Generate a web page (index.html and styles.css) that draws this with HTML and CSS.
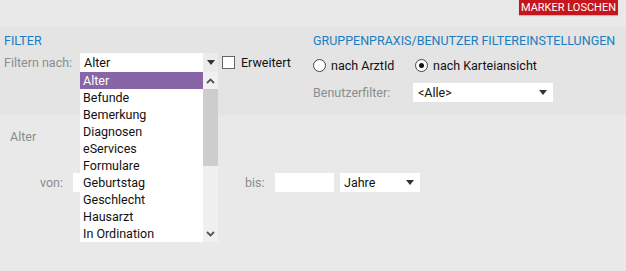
FILE: index.html
```html
<!DOCTYPE html>
<html lang="de">
<head>
  <meta charset="UTF-8" />
  <title>Filter</title>
  <link rel="stylesheet" href="styles.css">
</head>
<body>

  <div class="topbar">
    <button type="button" class="marker-btn">MARKER LOSCHEN</button>
  </div>

  <div class="filter-panel">
    <div class="filter-col">
      <div class="section-title">FILTER</div>
      <div class="filter-row">
        <span class="label filter-label">Filtern nach:</span>
        <div class="combo filter-combo">
          <div class="combo-box"><span>Alter</span></div>
          <div class="combo-arrow"><span class="tri"></span></div>

          <div class="dropdown">
            <ul class="dropdown-list">
              <li class="active">Alter</li>
              <li>Befunde</li>
              <li>Bemerkung</li>
              <li>Diagnosen</li>
              <li>eServices</li>
              <li>Formulare</li>
              <li>Geburtstag</li>
              <li>Geschlecht</li>
              <li>Hausarzt</li>
              <li>In Ordination</li>
            </ul>
            <div class="scrollbar">
              <div class="scroll-btn">
                <svg width="9" height="6" viewBox="0 0 9 6"><polyline points="1,5 4.5,1.5 8,5" fill="none" stroke="#555" stroke-width="1.8"/></svg>
              </div>
              <div class="scroll-thumb"></div>
              <div class="scroll-track"></div>
              <div class="scroll-btn">
                <svg width="9" height="6" viewBox="0 0 9 6"><polyline points="1,1 4.5,4.5 8,1" fill="none" stroke="#555" stroke-width="1.8"/></svg>
              </div>
            </div>
          </div>
        </div>
        <span class="checkbox"></span>
        <span class="text">Erweitert</span>
      </div>
    </div>

    <div class="settings-col">
      <div class="section-title">GRUPPENPRAXIS/BENUTZER FILTEREINSTELLUNGEN</div>
      <div class="radio-row">
        <span class="radio"></span>
        <span class="text arzt-text">nach ArztId</span>
        <span class="radio checked"></span>
        <span class="text">nach Karteiansicht</span>
      </div>
      <div class="user-row">
        <span class="label user-label">Benutzerfilter:</span>
        <div class="select user-select">
          <span>&lt;Alle&gt;</span>
          <span class="tri"></span>
        </div>
      </div>
    </div>
  </div>

  <div class="detail">
    <div class="label detail-title">Alter</div>
    <div class="range-row">
      <span class="label von-label">von:</span>
      <span class="input"></span>
      <div class="select unit-select von-select"><span>Jahre</span><span class="tri"></span></div>
      <span class="label bis-label">bis:</span>
      <span class="input bis-input"></span>
      <div class="select unit-select"><span>Jahre</span><span class="tri"></span></div>
    </div>
  </div>

</body>
</html>
```

FILE: styles.css
```css
body {
  margin: 0;
  font-family: Roboto, 'Liberation Sans', sans-serif;
  font-size: 12.5px;
  color: #111;
  background: #e9e9e9;
  height: 271px;
  overflow: hidden;
}

/* top bar */
.topbar {
  height: 26px;
  display: flex;
  justify-content: flex-end;
  padding-right: 8px;
}

.marker-btn {
  height: 15px;
  width: 99px;
  padding: 0;
  border: none;
  background: #c4161c;
  color: #fff;
  font-family: Roboto, 'Liberation Sans', sans-serif;
  font-size: 11px;
  line-height: 14px;
  box-shadow: 0 1px 1px rgba(0,0,0,0.2);
}

/* filter panel */
.filter-panel {
  background: #e4e4e4;
  height: 89px;
  display: flex;
  position: relative;
  z-index: 2;
}

.filter-col {
  width: 313px;
  padding-left: 4px;
  padding-top: 8px;
  box-sizing: border-box;
}

.settings-col {
  padding-top: 8px;
}

.section-title {
  color: #1a7dbf;
  line-height: 14px;
}

.label {
  color: #8c8c8c;
}

.filter-row {
  display: flex;
  align-items: center;
  margin-top: 5px;
}

.filter-label {
  width: 76px;
}

.combo {
  position: relative;
  display: flex;
  height: 19px;
}

.combo-box {
  width: 123px;
  background: #fff;
  display: flex;
  align-items: center;
  padding-left: 4px;
  box-sizing: border-box;
}

.combo-arrow {
  width: 15px;
  background: #ebebeb;
  display: flex;
  align-items: center;
  justify-content: center;
}

.tri {
  width: 0;
  height: 0;
  border-left: 4px solid transparent;
  border-right: 4px solid transparent;
  border-top: 5px solid #333;
}

.checkbox {
  width: 11px;
  height: 11px;
  border: 1px solid #666;
  background: #fff;
  margin-left: 4px;
  margin-right: 6px;
}

/* dropdown overlay */
.dropdown {
  position: absolute;
  top: 19px;
  left: 0;
  display: flex;
  height: 170px;
  z-index: 5;
}

.dropdown-list {
  list-style: none;
  margin: 0;
  padding: 0;
  width: 123px;
  background: #fff;
}

.dropdown-list li {
  height: 17px;
  line-height: 17px;
  padding-left: 3px;
  color: #111;
}

.dropdown-list li.active {
  background: #8765a6;
  color: #fff;
}

.scrollbar {
  width: 15px;
  background: #f0f0f0;
  display: flex;
  flex-direction: column;
}

.scroll-btn {
  height: 17px;
  display: flex;
  align-items: center;
  justify-content: center;
}

.scroll-thumb {
  height: 77px;
  background: #cdcdcd;
}

.scroll-track {
  flex: 1;
}

/* right column */
.radio-row {
  display: flex;
  align-items: center;
  margin-top: 10px;
}

.radio {
  width: 11px;
  height: 11px;
  border: 1px solid #444;
  border-radius: 50%;
  background: #fff;
  margin-right: 5px;
  display: flex;
  align-items: center;
  justify-content: center;
}

.radio.checked::after {
  content: "";
  width: 5px;
  height: 5px;
  border-radius: 50%;
  background: #111;
}

.arzt-text {
  width: 84px;
}

.user-row {
  display: flex;
  align-items: center;
  margin-top: 10px;
}

.user-label {
  width: 100px;
}

.select {
  height: 19px;
  background: #fff;
  display: flex;
  align-items: center;
  justify-content: space-between;
  padding: 0 6px 0 5px;
  box-sizing: border-box;
}

.user-select {
  width: 140px;
}

/* detail section */
.detail {
  padding-top: 15px;
}

.detail-title {
  padding-left: 10px;
  line-height: 14px;
}

.range-row {
  display: flex;
  align-items: center;
  margin-top: 29px;
  padding-left: 40px;
}

.von-label {
  width: 33px;
}

.input {
  width: 60px;
  height: 19px;
  background: #fff;
}

.bis-input {
  width: 59px;
}

.unit-select {
  width: 80px;
  margin-left: 6px;
  padding-left: 4px;
}

.von-select {
  width: 79px;
}

.bis-label {
  width: 30px;
  margin-left: 27px;
}
```
